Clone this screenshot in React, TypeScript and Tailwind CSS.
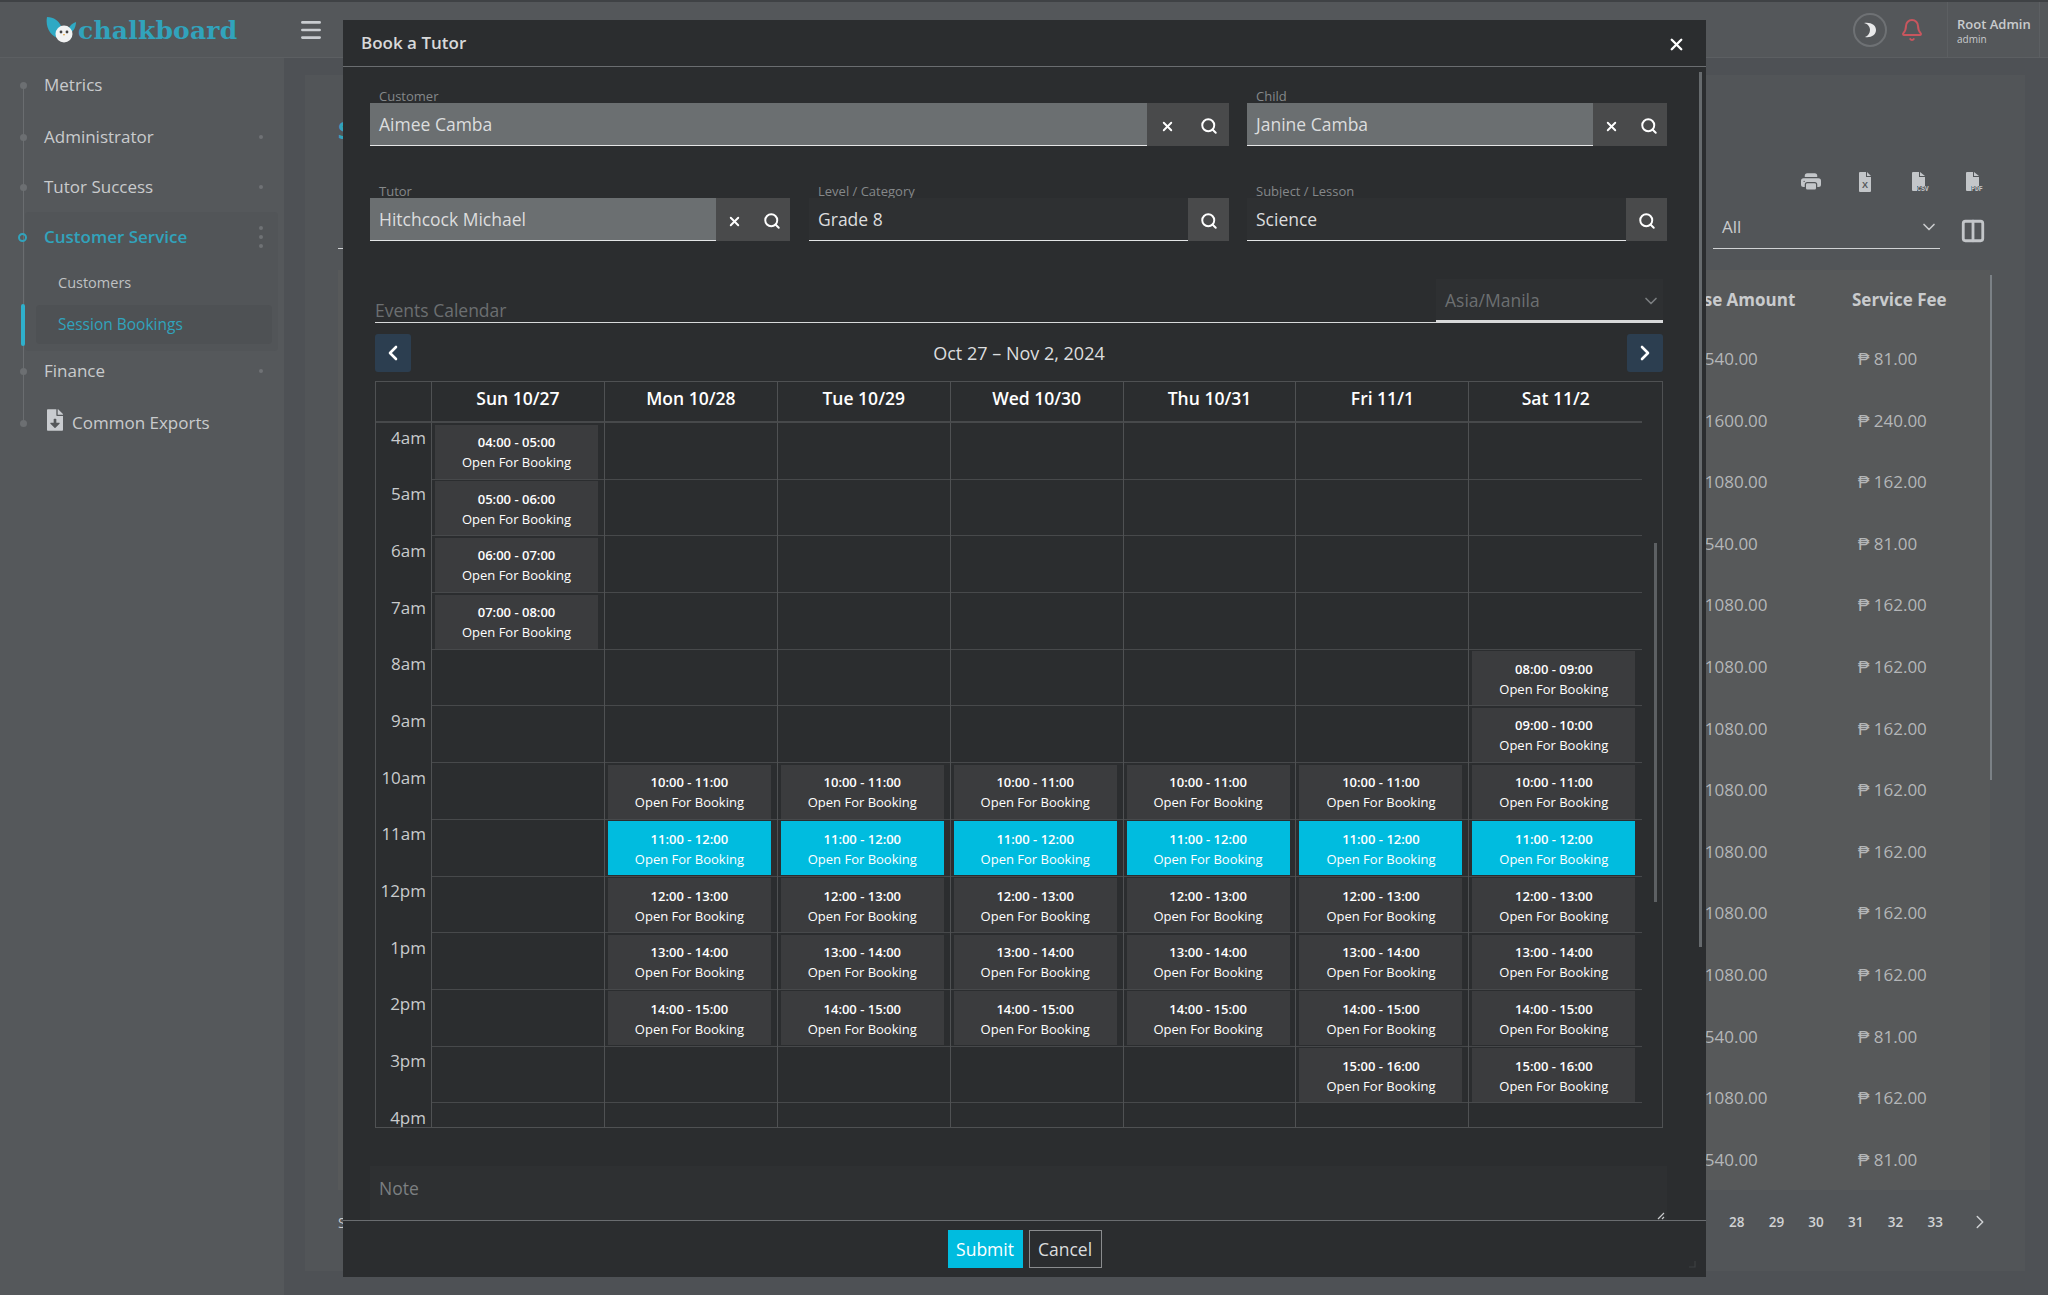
import { Bell, ChevronDown, ChevronLeft, ChevronRight, Columns2, Menu, Search, X } from 'lucide-react';
import { BsPrinterFill } from 'react-icons/bs';
import { FaFileDownload } from 'react-icons/fa';

const days = ['Sun 10/27', 'Mon 10/28', 'Tue 10/29', 'Wed 10/30', 'Thu 10/31', 'Fri 11/1', 'Sat 11/2'];
const hours = ['4am', '5am', '6am', '7am', '8am', '9am', '10am', '11am', '12pm', '1pm', '2pm', '3pm', '4pm'];

// open slots per day column, by hour of day
const openSlots: number[][] = [
  [4, 5, 6, 7],
  [10, 11, 12, 13, 14],
  [10, 11, 12, 13, 14],
  [10, 11, 12, 13, 14],
  [10, 11, 12, 13, 14],
  [10, 11, 12, 13, 14, 15],
  [8, 9, 10, 11, 12, 13, 14, 15],
];

const amounts = [
  [540, 81], [1600, 240], [1080, 162], [540, 81], [1080, 162], [1080, 162], [1080, 162],
  [1080, 162], [1080, 162], [1080, 162], [1080, 162], [540, 81], [1080, 162], [540, 81],
];

const pad = (n: number) => String(n).padStart(2, '0');

function Logo() {
  return (
    <div className="flex w-[190px] items-center">
      <svg width="31" height="28" viewBox="0 0 31 28" className="shrink-0">
        <path d="M1 1c7 0 12 4 14 9-3 3-4 8-2 12C5 21-1 11 1 1z" fill="#2fa9c4" />
        <path d="M30 6c-3 1-6 3-7 6l2 4c3-1 5-6 5-10z" fill="#2fa9c4" />
        <circle cx="18" cy="18" r="8.5" fill="#f2f3f3" />
        <circle cx="15" cy="16" r="1.4" fill="#444" />
        <circle cx="21" cy="16" r="1.4" fill="#444" />
        <path d="M17 18h2l-1 2z" fill="#e3a33a" />
      </svg>
      <span className="mt-[1px] ml-[1px] font-['DejaVu_Serif',serif] text-[25px] leading-none font-bold tracking-[0.2px] text-[#31a3bc]">chalkboard</span>
    </div>
  );
}

function Bullet() {
  return <span className="absolute left-[20px] h-[7px] w-[7px] rounded-full bg-[#6c6f72]" />;
}

function NavItem({ label, dots, className }: { label: string; dots?: boolean; className: string }) {
  return (
    <div className={`relative flex h-[40px] items-center pl-[44px] text-[17px] text-[#c9cbcd] ${className}`}>
      <Bullet />
      {label}
      {dots && <span className="absolute left-[259px] h-[4px] w-[4px] rounded-full bg-[#6f7275]" />}
    </div>
  );
}

function Sidebar() {
  return (
    <aside className="relative w-[284px] shrink-0 bg-[#55585b] pt-[7px]">
      <span className="absolute left-[23px] top-[27px] h-[338px] w-px bg-[#6a6d70]" />
      <NavItem label="Metrics" className="" />
      <NavItem label="Administrator" dots className="mt-[12px]" />
      <NavItem label="Tutor Success" dots className="mt-[10px]" />
      <div className="relative mt-[5px] ml-[25px] w-[253px] rounded-[4px] bg-[#525558] pt-[5px] pb-[7px]">
        <div className="flex h-[40px] items-center pl-[19px] text-[17px] font-semibold text-[#31a3bc]">
          <span className="absolute -left-[7px] h-[9px] w-[9px] rounded-full border-2 border-[#31a3bc]" />
          Customer Service
          <span className="absolute left-[234px] flex flex-col gap-[5px]">
            <span className="h-[4px] w-[4px] rounded-full bg-[#6f7275]" />
            <span className="h-[4px] w-[4px] rounded-full bg-[#6f7275]" />
            <span className="h-[4px] w-[4px] rounded-full bg-[#6f7275]" />
          </span>
        </div>
        <div className="mt-[6px] flex h-[40px] items-center pl-[33px] text-[14.5px] text-[#bfc1c3]">Customers</div>
        <div className="relative mt-[2px] ml-[11px] flex h-[39px] w-[236px] items-center rounded-[4px] bg-[#4e5154] pl-[22px] text-[15.5px] font-medium text-[#31a3bc]">
          <span className="absolute -left-[15px] h-[42px] w-[4px] rounded-full bg-[#2fb0cc]" />
          Session Bookings
        </div>
      </div>
      <NavItem label="Finance" dots className="mt-0" />
      <div className="relative mt-[12px] flex h-[40px] items-center pl-[47px] text-[17px] text-[#c9cbcd]">
        <Bullet />
        <FaFileDownload className="-mt-[6px] mr-[9px] h-[22px] w-[16px] text-[#c9ccd0]" />
        Common Exports
      </div>
    </aside>
  );
}

function FileBadge({ label, big }: { label: string; big?: boolean }) {
  return (
    <div className="flex h-[44px] w-[54px] items-center justify-center">
      <svg width="22" height="20" viewBox="0 0 22 20" fill="#c3c6c9">
        {big ? (
          <>
            <path d="M4 1a1 1 0 0 1 1-1h6v5h6v9H9v5H5a1 1 0 0 1-1-1z" />
            <path d="M12 0l5 4h-5z" />
            <text x="9" y="19" fontSize="6.5" fontWeight="700" fontFamily="Liberation Mono, monospace">{label}</text>
          </>
        ) : (
          <>
            <path d="M5 1a1 1 0 0 1 1-1h6v5h5v14a1 1 0 0 1-1 1H6a1 1 0 0 1-1-1z" />
            <path d="M13 0l4 4h-4z" />
            <text x="8" y="16" fontSize="9" fontWeight="700" fill="#55585b" fontFamily="Liberation Sans, sans-serif">{label}</text>
          </>
        )}
      </svg>
    </div>
  );
}

function MainPage() {
  return (
    <main className="min-w-0 flex-1 bg-[#4e5155] pt-[17px] pl-[21px]">
      <div className="relative h-[1196px] w-[1720px] bg-[#525558] pl-[33px]">
        <div className="w-[1662px]">
          <div className="pt-[42px] text-[24px] leading-[26px] font-bold text-[#31a3bc]">Session Bookings</div>
          <div className="mt-[17px] flex justify-end">
            <div className="flex h-[44px] w-[54px] items-center justify-center text-[20px] text-[#c3c6c9]">
              <BsPrinterFill />
            </div>
            <FileBadge label="X" />
            <FileBadge label="CSV" big />
            <FileBadge label="PDF" big />
          </div>
          <div className="flex h-[45px] items-end justify-between">
            <div className="w-[200px] border-b border-[#d0d2d4]" />
            <div className="flex items-center">
              <div className="flex h-[44px] w-[227px] items-center justify-between border-b border-[#d0d2d4] pr-[1px] pl-[9px] text-[17px] text-[#c9cbcd]">
                All
                <ChevronDown className="h-[20px] w-[20px] text-[#c9cbcd]" />
              </div>
              <Columns2 className="mt-[8px] mr-[14px] ml-[20px] h-[26px] w-[26px] text-[#c3c6c9]" strokeWidth={2.6} />
            </div>
          </div>
          <div className="mt-[21px] mr-[10px] bg-[#57595a] pr-[5px]">
            <div className="flex h-[58px] items-center justify-end pt-[2px] text-[17px] font-bold text-[#c9cbcd]">
              <div className="-ml-[5px] w-[170px]">Base Amount</div>
              <div className="w-[133px]">Service Fee</div>
            </div>
            {amounts.map(([amount, fee], i) => (
              <div key={i} className="flex h-[61.6px] items-center justify-end text-[17px] text-[#b4b6b8]">
                <div className="w-[165px] pl-[2px]">₱ {amount}.00</div>
                <div className="w-[133px] pl-[6px]">₱ {fee}.00</div>
              </div>
            ))}
          </div>
          <div className="mt-[10px] flex h-[44px] items-center justify-between pr-[9px] text-[14px]">
            <span className="text-[#c9cbcd]">Showing 1 to 14 of 466 rows</span>
            <div className="flex items-center text-[13.5px] font-semibold text-[#d0d2d4]">
              {[28, 29, 30, 31, 32, 33].map(n => (
                <span key={n} className="w-[39.7px] text-center">{n}</span>
              ))}
              <ChevronRight className="ml-[14px] h-[22px] w-[22px]" strokeWidth={1.6} />
            </div>
          </div>
        </div>
        <span className="absolute top-[200px] left-[1685px] h-[505px] w-[2px] bg-[#7b8186]" />
      </div>
    </main>
  );
}

function TopBar() {
  return (
    <header className="flex h-[58px] shrink-0 items-center border-t-2 border-b border-t-[#3f4245] border-b-[#5c5f62] bg-[#54575a] pl-[46px]">
      <Logo />
      <Menu className="ml-[62px] h-[26px] w-[26px] text-[#c9ccd0]" strokeWidth={2.4} />
      <div className="ml-auto flex h-full items-center">
        <div className="flex h-[34px] w-[34px] items-center justify-center rounded-full border-2 border-[#6e7174]">
          <svg width="14" height="16" viewBox="0 0 14 16">
            <path d="M1 1c7-1 12 2 12 7s-5 8-11 7c3-1 5-4 5-7S5 2 1 1z" fill="#e8e9ea" />
          </svg>
        </div>
        <Bell className="mr-[23px] ml-[13px] h-[24px] w-[24px] text-[#c8565e]" strokeWidth={2} />
        <div className="flex h-full w-[93px] flex-col justify-center border-x border-[#5c5f62] pl-[9px]">
          <span className="text-[13px] leading-[18px] font-semibold text-[#c9cbcd]">Root Admin</span>
          <span className="text-[10px] leading-[12px] font-medium text-[#c9cbcd]">admin</span>
        </div>
        <div className="w-[8px]" />
      </div>
    </header>
  );
}

function Field({ label, value, className, filled, actionsWidth }: { label: string; value: string; className: string; filled?: boolean; actionsWidth?: string }) {
  return (
    <div className={className}>
      <div className="h-[13px] pl-[9px] text-[13px] leading-[13px] text-[#85888a]">{label}</div>
      <div className="flex h-[43px]">
        <div className={`flex min-w-0 flex-1 items-center border-b border-[#e4e5e6] pl-[9px] text-[17.5px] text-[#dcddde] ${filled ? 'bg-[#6b6f71]' : 'bg-[#2e3032]'}`}>
          {value}
        </div>
        <div className={`flex items-center bg-[#494a4b] text-white ${actionsWidth ?? 'w-[41px]'}`}>
          {actionsWidth && (
            <span className="flex flex-1 justify-center pt-[3px]">
              <X className="h-[15px] w-[15px]" strokeWidth={3} />
            </span>
          )}
          <span className="flex flex-1 justify-center pt-[3px]">
            <Search className="h-[18px] w-[18px]" strokeWidth={2.6} />
          </span>
        </div>
      </div>
    </div>
  );
}

function EventCard({ hour }: { hour: number }) {
  const selected = hour === 11;
  return (
    <div className={`flex h-[54px] w-[163px] flex-col items-center pt-[7.5px] text-[13px] leading-[20px] text-white ${selected ? 'bg-[#00bcdf]' : 'bg-[#3b3c3e]'}`}>
      <span className="font-semibold">{pad(hour)}:00 - {pad(hour + 1)}:00</span>
      <span>Open For Booking</span>
    </div>
  );
}

function Calendar() {
  return (
    <div className="relative mt-[9px] h-[747px] overflow-hidden border border-[#4f5153]">
      <div className="flex h-[41px]">
        <div className="w-[56px] border-r border-b-2 border-r-[#4f5153] border-b-[#47494b]" />
        {days.map(d => (
          <div
            key={d}
            className="flex w-[172.9px] items-center justify-center border-r border-b-2 border-r-[#4f5153] border-b-[#47494b] pb-[6px] text-[17.5px] font-semibold text-white last:border-r-0"
          >
            {d}
          </div>
        ))}
      </div>
      <div className="flex">
        <div className="w-[56px] border-r border-[#4f5153]">
          {hours.map(h => (
            <div key={h} className="h-[56.7px] pt-[1.5px] pr-[5px] text-right text-[17px] leading-[26px] text-[#c9cbcd]">{h}</div>
          ))}
        </div>
        {days.map((d, col) => (
          <div key={d} className={`w-[172.9px] ${col === 6 ? '' : 'border-r border-[#4f5153]'}`}>
            {hours.map((_, row) => (
              <div key={row} className="h-[56.7px] border-b border-[#47494b] pt-[1.5px] pl-[3px]">
                {openSlots[col].includes(row + 4) && <EventCard hour={row + 4} />}
              </div>
            ))}
          </div>
        ))}
      </div>
      <span className="absolute top-[161px] left-[1278px] h-[359px] w-[3px] bg-[#5d6063]" />
    </div>
  );
}

function BookingModal() {
  return (
    <div className="absolute top-[20px] left-[343px] flex h-[1257px] w-[1363px] flex-col bg-[#2b2d2f] font-['Open_Sans',sans-serif]">
      <div className="flex h-[47px] shrink-0 items-center justify-between border-b border-[#6a6d70] pr-[20px] pl-[18px]">
        <span className="text-[17px] font-semibold text-[#d8d9da]">Book a Tutor</span>
        <X className="mt-[2px] h-[19px] w-[19px] text-white" strokeWidth={3} />
      </div>
      <div className="relative min-h-0 flex-1 overflow-hidden pt-[23px] pr-[39px] pl-[27px]">
        <div className="flex gap-[18px]">
          <Field label="Customer" value="Aimee Camba" className="w-[859px]" filled actionsWidth="w-[82px]" />
          <Field label="Child" value="Janine Camba" className="w-[420px]" filled actionsWidth="w-[74px]" />
        </div>
        <div className="mt-[39px] flex gap-[18px]">
          <Field label="Tutor" value="Hitchcock Michael" className="w-[420px]" filled actionsWidth="w-[74px]" />
          <Field label="Level / Category" value="Grade 8" className="ml-[1px] w-[420px]" />
          <Field label="Subject / Lesson" value="Science" className="w-[420px]" />
        </div>
        <div className="mt-[39px] mr-[4px] ml-[5px] flex h-[43px] items-end justify-between border-b border-[#d8d9da]">
          <span className="pb-[1px] text-[17.5px] leading-[22px] text-[#6c6f71]">Events Calendar</span>
          <div className="flex h-[43px] w-[227px] items-center justify-between border-b-2 border-[#d8d9da] bg-[#2e3032] pt-[2px] pr-[2px] pl-[9px] text-[17.5px] text-[#6c6f71]">
            Asia/Manila
            <ChevronDown className="h-[20px] w-[20px] text-[#7b7e80]" />
          </div>
        </div>
        <div className="mr-[4px] ml-[5px]">
          <div className="mt-[11px] flex h-[38px] items-center justify-between">
            <div className="flex h-[38px] w-[36px] items-center justify-center rounded-[3px] bg-[#2c3e50] text-white">
              <ChevronLeft className="h-[24px] w-[24px]" strokeWidth={2.6} />
            </div>
            <span className="text-[18px] font-medium text-[#dcddde]">Oct 27 – Nov 2, 2024</span>
            <div className="flex h-[38px] w-[36px] items-center justify-center rounded-[3px] bg-[#2c3e50] text-white">
              <ChevronRight className="h-[24px] w-[24px]" strokeWidth={2.6} />
            </div>
          </div>
          <Calendar />
        </div>
        <div className="relative mt-[38px] h-[90px] bg-[#2e3032] pt-[9px] pl-[9px] text-[17.5px] text-[#7c7f81]">
          Note
          <svg width="8" height="8" viewBox="0 0 8 8" className="absolute top-[46px] right-[2px] text-[#c9cbcd]">
            <path d="M1 7l6-6M5 7l2-2" stroke="currentColor" strokeWidth="1.2" />
          </svg>
        </div>
        <span className="absolute top-[5px] left-[1356px] h-[875px] w-[3px] bg-[#666a6d]" />
      </div>
      <div className="relative flex h-[57px] shrink-0 items-start justify-center gap-[6px] border-t border-[#6a6d70] pt-[9px]">
        <button className="h-[38px] w-[75px] bg-[#00bcdf] text-[17.5px] text-white">Submit</button>
        <button className="h-[38px] w-[73px] border border-[#8a8c8e] text-[17.5px] text-[#dcddde]">Cancel</button>
        <svg width="8" height="8" viewBox="0 0 8 8" className="absolute right-[10px] bottom-[9px] text-[#3d4042]">
          <path d="M7 1v6H1" fill="none" stroke="currentColor" strokeWidth="1.2" />
        </svg>
      </div>
    </div>
  );
}

export default function App() {
  return (
    <div className="relative flex h-[1295px] w-[2048px] flex-col overflow-hidden bg-[#4e5155] font-['Open_Sans',sans-serif]">
      <TopBar />
      <div className="flex min-h-0 flex-1">
        <Sidebar />
        <MainPage />
      </div>
      <BookingModal />
    </div>
  );
}
